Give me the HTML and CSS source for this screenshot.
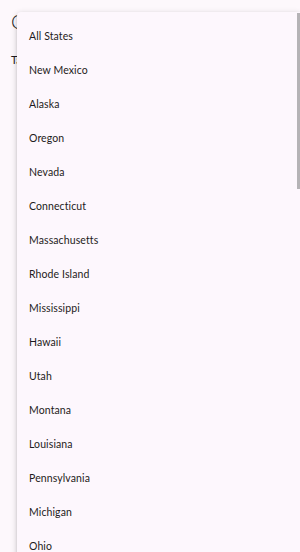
FILE: index.html
```html
<!DOCTYPE html>
<html lang="en">
  <head>
    <meta charset="UTF-8" />
    <meta name="viewport" content="width=device-width, initial-scale=1.0" />
    <title>States</title>
    <link rel="stylesheet" href="styles.css">
  </head>
  <body>
    <div class="page">
      <div class="page-title">Choose a state</div>
      <div class="page-text">Tap to filter</div>
    </div>

    <div class="menu">
      <div class="menu-list">
        <div class="menu-item">All States</div>
        <div class="menu-item">New Mexico</div>
        <div class="menu-item">Alaska</div>
        <div class="menu-item">Oregon</div>
        <div class="menu-item">Nevada</div>
        <div class="menu-item">Connecticut</div>
        <div class="menu-item">Massachusetts</div>
        <div class="menu-item">Rhode Island</div>
        <div class="menu-item">Mississippi</div>
        <div class="menu-item">Hawaii</div>
        <div class="menu-item">Utah</div>
        <div class="menu-item">Montana</div>
        <div class="menu-item">Louisiana</div>
        <div class="menu-item">Pennsylvania</div>
        <div class="menu-item">Michigan</div>
        <div class="menu-item">Ohio</div>
      </div>
      <div class="scroll-thumb"></div>
    </div>
  </body>
</html>
```

FILE: styles.css
```css
html,
body {
  margin: 0;
  height: 100%;
  overflow: hidden;
}

body {
  background: #fdf8fc;
  font-family: Lato, "Noto Sans", sans-serif;
  color: #1d1b20;
}

.page {
  padding: 11px 11px;
}

.page-title {
  font-size: 20px;
  line-height: 20px;
  font-weight: 300;
}

.page-text {
  margin-top: 22px;
  font-size: 11px;
}

.menu {
  position: absolute;
  top: 12px;
  left: 17px;
  right: 0;
  bottom: -20px;
  background: #fdf7fd;
  border-radius: 4px 0 0 0;
  box-shadow: 0 2px 6px rgba(0, 0, 0, 0.22), 0 1px 2px rgba(0, 0, 0, 0.12);
  overflow: hidden;
}

.menu-list {
  padding-top: 7px;
}

.menu-item {
  height: 34px;
  line-height: 34px;
  padding-left: 12px;
  font-size: 10.5px;
  letter-spacing: 0.1px;
  color: #1d1b20;
}

.scroll-thumb {
  position: absolute;
  top: 1px;
  right: 0;
  width: 3px;
  height: 176px;
  background: #b5b3b6;
}
```
